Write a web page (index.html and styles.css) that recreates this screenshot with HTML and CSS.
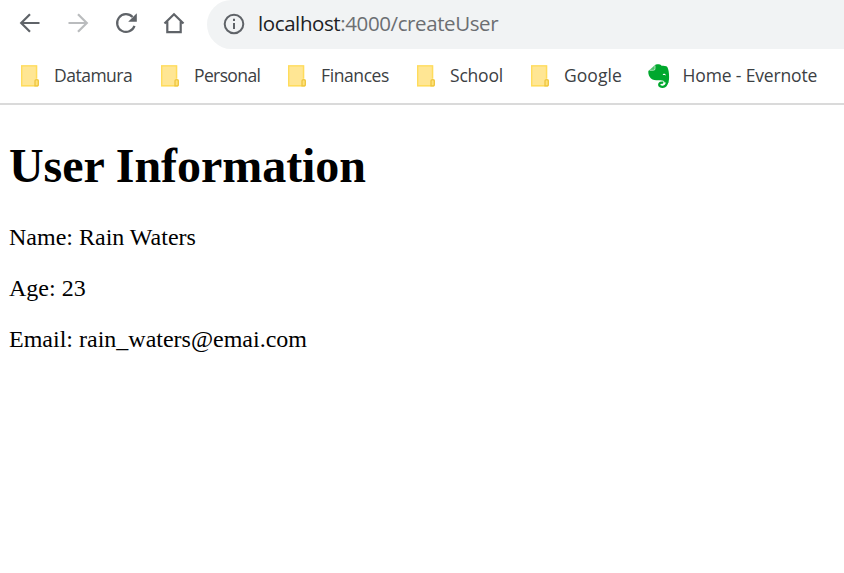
FILE: index.html
```html
<!DOCTYPE html>
<html lang="en">
<head>
<meta charset="utf-8">
<title>User Information</title>
<link rel="stylesheet" href="styles.css">
</head>
<body>
<svg class="defs" width="0" height="0" aria-hidden="true">
  <symbol id="folder" viewBox="0 0 20 24">
    <path d="M1 1.200h16.200v13.700c1.100 0 1.700.6 1.700 1.500v5.900H1z" fill="#ffe694"/>
    <path d="M16.500 14.500V1.900H1.700v19.900H18" fill="none" stroke="#ffdc5c" stroke-width="1.400"/>
    <path d="M15 21.800v-5c0-1.500 3.300-1.500 3.300 0v4q0 1-1 1z" fill="#ffe27a" stroke="#eec53f" stroke-width="1.300"/>
  </symbol>
</svg>
<header class="browser">
  <div class="toolbar">
    <div class="controls">
      <svg class="control" viewBox="0 0 24 24"><path d="M21.500 12H3.500M12 3.200L3.200 12l8.800 8.800"/></svg>
      <svg class="control disabled" viewBox="0 0 24 24"><path d="M2.500 12h18M12 3.200l8.800 8.800-8.800 8.800"/></svg>
      <svg class="control" viewBox="0 0 24 24"><path d="M20.500 14.800A8.900 8.900 0 1 1 18.600 6"/><path class="solid" d="M22.800 2.200v8.600h-8.600z"/></svg>
      <svg class="control" viewBox="0 0 24 24"><path d="M2.500 12.500L12 3.200l9.500 9.300M5.300 10.500v10.700h13.400V10.500"/></svg>
    </div>
    <div class="address">
      <svg class="info" viewBox="0 0 22 22"><circle cx="11" cy="11" r="9.300"/><path d="M11 10v6M11 5.800v2.200"/></svg>
      <span class="url"><span class="host">localhost</span>:4000/createUser</span>
    </div>
  </div>
  <nav class="bookmarks">
    <a class="bookmark"><svg class="icon"><use href="#folder"/></svg><span class="tight">Datamura</span></a>
    <a class="bookmark"><svg class="icon"><use href="#folder"/></svg><span class="tighter">Personal</span></a>
    <a class="bookmark"><svg class="icon"><use href="#folder"/></svg><span>Finances</span></a>
    <a class="bookmark"><svg class="icon"><use href="#folder"/></svg><span class="loose">School</span></a>
    <a class="bookmark"><svg class="icon"><use href="#folder"/></svg><span class="looser">Google</span></a>
    <a class="bookmark evernote"><svg class="elephant" viewBox="0 0 22 24">
      <path fill="#00a82d" d="M7 1C8 .1 12.500-.1 13.500 1.800c2 .2 5 .1 5.800 1.300C20.900 6 21.300 11 21 15.500l-.6 3.300-3.800-.3c-.2-1.600-1.600-1.900-4.200-2.200C9.500 16.400 5.500 16.600 3 14.500 1 12.700.2 10 .3 7.600.4 6.500 1 6 2 6h3.200C6.200 6 7 5.500 7 4.500z"/>
      <path fill="none" stroke="#00a82d" stroke-width="2.300" d="M15.300 18.700c-2.200-.5-4.100.3-4.100 2 0 1.500 1.500 2.200 3.600 2.100 2.800-.1 4-2.100 4.500-5.300"/>
      <path d="M1.500 6L7 1v3.700q0 1.300-1.500 1.300z" fill="#4bc26b"/>
      <path d="M1.500 6.300h3.900q1.600 0 1.600-1.600V1.500" fill="none" stroke="#c9efd1" stroke-width=".8"/>
      <path d="M14.700 11c.4-1.700 2.700-1.700 3.300.4-1.200-.5-2-.6-3.300-.4z" fill="#fff"/>
    </svg><span class="wide">Home - Evernote</span></a>
  </nav>
</header>
<main class="page">
  <h1>User Information</h1>
  <p>Name: Rain Waters</p>
  <p>Age: 23</p>
  <p>Email: rain_waters@emai.com</p>
</main>
</body>
</html>
```
FILE: styles.css
```css
* { box-sizing: border-box; }
body { margin: 0; background: #fff; color: #000; overflow: hidden; }
.defs { display: block; }
.browser { height: 105px; border-bottom: 2px solid #dadada; font-family: "Open Sans", sans-serif; }
.toolbar { display: flex; height: 49px; }
.controls { display: flex; gap: 24px; width: 207px; padding: 11px 0 0 18px; flex: none; }
.control { width: 24px; height: 24px; fill: none; stroke: #5f6368; stroke-width: 2.2; }
.disabled { stroke: #babcbe; }
.control .solid { fill: #5f6368; stroke: none; }
.address { display: flex; align-items: center; flex: 1; height: 49px; padding: 0 0 1px 16px; background: #f1f3f4; border-radius: 25px 0 0 25px; }
.info { width: 22px; height: 22px; fill: none; stroke: #5f6368; stroke-width: 2; }
.url { margin-left: 13px; padding-bottom: 2px; font-size: 20.5px; letter-spacing: -0.4px; color: #6b6e72; white-space: nowrap; }
.host { color: #202124; }
.bookmarks { display: grid; grid-template-columns: 140px 127px 129px 114px 118px auto; height: 54px; padding-left: 20px; align-items: center; }
.bookmark { display: flex; align-items: center; gap: 14px; font-size: 17.5px; line-height: 24px; color: #3c4043; white-space: nowrap; }
.bookmark span { padding-bottom: 2px; letter-spacing: -0.4px; }
.bookmark .tight { letter-spacing: -0.5px; }
.bookmark .tighter { letter-spacing: -0.62px; }
.bookmark .loose { letter-spacing: -0.2px; }
.bookmark .looser { letter-spacing: 0.05px; }
.bookmark .wide { letter-spacing: -0.15px; }
.evernote { gap: 12.5px; }
.icon { width: 20px; height: 24px; flex: none; }
.elephant { width: 22px; height: 24px; flex: none; }
.page { margin: 0 9px; font-family: "Liberation Serif", serif; font-size: 24px; line-height: 27px; }
h1 { margin: 33px 0 31px; font-size: 48px; line-height: 55px; letter-spacing: -0.05px; }
p { margin: 0 0 24px; }
```
